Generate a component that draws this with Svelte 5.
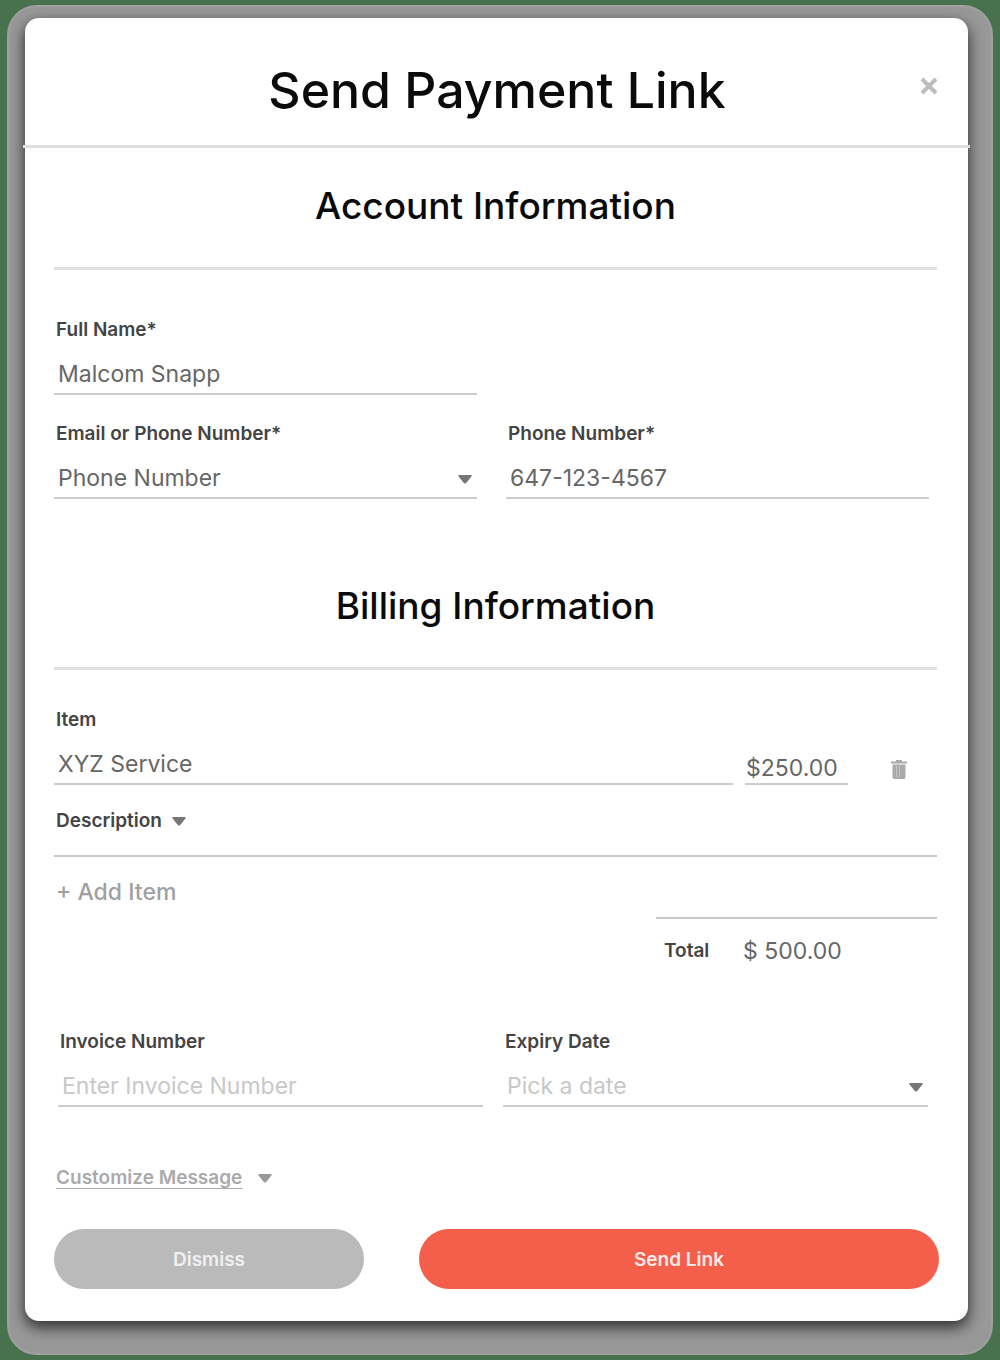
<script>
  let fullName = $state('Malcom Snapp');
  let contactType = $state('phone');
  let phone = $state('647-123-4567');
  let item = $state('XYZ Service');
  let price = $state('$250.00');
  let invoice = $state('');
  let expiry = $state('');
  let total = $state('$ 500.00');
</script>

{#snippet caret()}
  <svg class="caret" viewBox="0 0 14 9" aria-hidden="true"><path d="M1 0h12q1.2.3.4 1.4L8.2 8q-1.2 1.2-2.4 0L.6 1.4Q-.2.3 1 0z" /></svg>
{/snippet}

<div class="backdrop">
  <div class="halo">
    <form class="modal" onsubmit={(e) => e.preventDefault()}>
      <header>
        <h1>Send Payment Link</h1>
        <button type="button" class="icon close" aria-label="Close">
          <svg viewBox="0 0 18 18" width="18" height="18"><path d="M2 2l14 14M16 2L2 16" /></svg>
        </button>
      </header>

      <div class="body">
        <h2>Account Information</h2>
        <div class="grid account">
          <div class="field">
            <label for="name">Full Name*</label>
            <input id="name" bind:value={fullName} />
          </div>
          <div class="field newline">
            <label for="type">Email or Phone Number*</label>
            <div class="select">
              <select id="type" bind:value={contactType}>
                <option value="phone">Phone Number</option>
                <option value="email">Email</option>
              </select>
              {@render caret()}
            </div>
          </div>
          <div class="field">
            <label for="phone">Phone Number*</label>
            <input id="phone" type="tel" bind:value={phone} />
          </div>
        </div>

        <h2>Billing Information</h2>
        <div class="item">
          <div class="field">
            <label for="item">Item</label>
            <input id="item" bind:value={item} />
          </div>
          <input class="price" aria-label="Price" bind:value={price} />
          <button type="button" class="icon trash" aria-label="Remove item">
            <svg viewBox="0 0 16 19" width="16" height="19">
              <path d="M0 1.5h5V0h6v1.5h5v2H0zM1.5 4.5h13V17q0 2-2 2h-9q-2 0-2-2z" />
              <path class="ribs" d="M5.5 6v11M8.5 6v11" />
            </svg>
          </button>
        </div>
        <div class="description">
          <button type="button" class="toggle">Description {@render caret()}</button>
        </div>

        <button type="button" class="add">+ Add Item</button>
        <div class="total">
          <span class="total-label">Total</span>
          <output>{total}</output>
        </div>

        <div class="grid invoice">
          <div class="field">
            <label for="invoice">Invoice Number</label>
            <input id="invoice" placeholder="Enter Invoice Number" bind:value={invoice} />
          </div>
          <div class="field">
            <label for="expiry">Expiry Date</label>
            <div class="select">
              <select id="expiry" class:empty={!expiry} bind:value={expiry}>
                <option value="">Pick a date</option>
                <option value="7">In 7 days</option>
                <option value="30">In 30 days</option>
              </select>
              {@render caret()}
            </div>
          </div>
        </div>

        <button type="button" class="toggle customize"><u>Customize Message</u> {@render caret()}</button>
      </div>

      <footer>
        <button type="button" class="pill dismiss">Dismiss</button>
        <button type="submit" class="pill send">Send Link</button>
      </footer>
    </form>
  </div>
</div>

<style>
  :global(body) {
    margin: 0;
    background: #48714d;
  }

  .backdrop {
    padding: 5px 7px;
    font-family: Inter, 'Liberation Sans', sans-serif;
    color: #444;
  }

  .halo {
    padding: 11px 23px 32px 16px;
    border: 2px solid #a0a0a0;
    border-radius: 30px;
    background: #989898;
  }

  .modal {
    border-radius: 14px;
    background: #fff;
    box-shadow: 0 6px 14px 1px rgba(0, 0, 0, 0.65);
  }

  button,
  input,
  select {
    box-sizing: border-box;
    margin: 0;
    padding: 0;
    border: 0;
    border-radius: 0;
    background: none;
    font: inherit;
    color: inherit;
  }

  button {
    cursor: pointer;
  }

  header {
    display: grid;
    grid-template-columns: 60px 1fr 60px;
    align-items: center;
    height: 127px;
    margin: 0 -2px;
    padding: 0 11px 0 12px;
    border-bottom: 3px solid #e0e0e0;
  }

  h1,
  h2 {
    margin: 0;
    color: #0a0a0a;
    text-align: center;
    font-weight: 500;
  }

  h1 {
    grid-column: 2;
    padding-top: 16px;
    font-size: 50px;
    line-height: 60px;
  }

  .icon {
    display: flex;
    justify-content: center;
    align-items: center;
  }

  .close {
    height: 60px;
    padding-top: 8px;
  }

  .close path {
    stroke: #bdbdbd;
    stroke-width: 4;
  }

  .body {
    padding: 0 31px 0 29px;
  }

  h2 {
    padding: 36px 0 39px;
    border-bottom: 3px solid #e0e0e0;
    font-size: 37px;
    line-height: 44px;
  }

  .grid {
    display: grid;
    grid-template-columns: 1fr 1fr;
  }

  .account {
    gap: 29px;
    padding: 50px 8px 49px 0;
  }

  .newline {
    grid-column: 1;
  }

  .field {
    display: flex;
    flex-direction: column;
    gap: 15px;
    min-width: 0;
  }

  label,
  .total-label,
  .toggle {
    font-size: 19px;
    line-height: 20px;
    font-weight: 600;
  }

  label {
    padding-left: 2px;
  }

  input,
  select {
    width: 100%;
    height: 40px;
    padding: 0 4px;
    border-bottom: 2px solid #ccc;
    font-size: 23px;
    color: #666;
    outline: none;
  }

  input::placeholder,
  .empty {
    color: #c8c8c8;
    opacity: 1;
  }

  .select {
    display: grid;
    align-items: center;
  }

  .select > * {
    grid-area: 1 / 1;
  }

  .select .caret {
    justify-self: end;
    margin-right: 5px;
    pointer-events: none;
  }

  select {
    appearance: none;
  }

  .caret {
    width: 14px;
    height: 9px;
    fill: #777;
  }

  .item {
    display: grid;
    grid-template-columns: 1fr 103px 77px;
    gap: 12px;
    align-items: end;
    padding-top: 40px;
  }

  .price {
    height: 32px;
    padding: 0 1px;
  }

  .trash {
    height: 32px;
    fill: #aaa;
  }

  .ribs {
    stroke: #c4c4c4;
  }

  .description {
    padding: 26px 0 24px;
    border-bottom: 2px solid #c8c8c8;
  }

  .toggle {
    display: flex;
    align-items: center;
    gap: 10px;
    padding-left: 2px;
  }

  .add {
    display: block;
    padding: 23px 2px 13px;
    font-size: 23px;
    line-height: 24px;
    font-weight: 500;
    color: #a0a0a0;
  }

  .total {
    display: grid;
    grid-template-columns: 79px 1fr;
    align-items: center;
    box-sizing: border-box;
    width: 281px;
    margin-left: auto;
    padding: 20px 0 0 8px;
    border-top: 2px solid #c8c8c8;
  }

  output {
    font-size: 23px;
    line-height: 24px;
    color: #666;
  }

  .invoice {
    gap: 20px;
    padding: 69px 9px 0 4px;
  }

  .customize {
    gap: 16px;
    padding-top: 61px;
    color: #aaa;
  }

  .customize .caret {
    fill: #999;
  }

  .customize u {
    text-decoration-thickness: 1px;
    text-underline-offset: 4px;
  }

  footer {
    display: grid;
    grid-template-columns: 31fr 52fr;
    gap: 55px;
    padding: 41px 29px 32px;
  }

  .pill {
    height: 60px;
    border-radius: 30px;
    font-size: 19px;
    font-weight: 600;
    color: #ffe9e6;
  }

  .dismiss {
    background: #bababa;
    color: #f0f0f0;
  }

  .send {
    background: #f35f4b;
  }
</style>
